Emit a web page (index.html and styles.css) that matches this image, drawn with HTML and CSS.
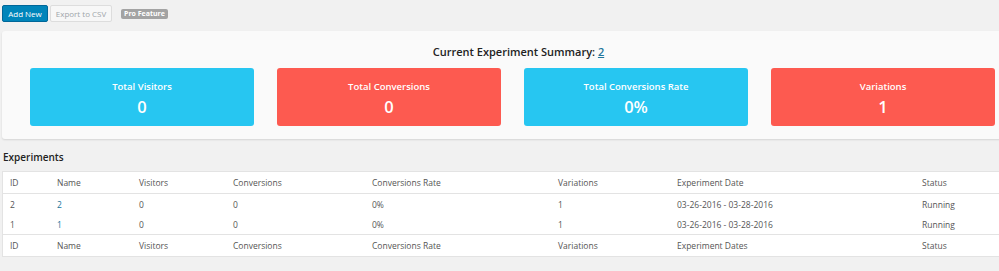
FILE: index.html
```html
<!DOCTYPE html>
<html>
<head>
    <title>Experiments</title>
    <link rel="stylesheet" href="styles.css">
</head>
<body>
    <div class="toolbar">
        <button class="button button-primary">Add New</button>
        <button class="button button-disabled">Export to CSV</button>
        <span class="pro-badge">Pro Feature</span>
    </div>

    <div class="summary-panel">
        <h2 class="summary-title">Current Experiment Summary: <a href="#">2</a></h2>
        <div class="summary-cards">
            <div class="card card-blue">
                <div class="card-label">Total Visitors</div>
                <div class="card-value">0</div>
            </div>
            <div class="card card-red">
                <div class="card-label">Total Conversions</div>
                <div class="card-value">0</div>
            </div>
            <div class="card card-blue">
                <div class="card-label">Total Conversions Rate</div>
                <div class="card-value">0%</div>
            </div>
            <div class="card card-red">
                <div class="card-label">Variations</div>
                <div class="card-value">1</div>
            </div>
        </div>
    </div>

    <h3 class="section-title">Experiments</h3>

    <table class="experiments">
        <thead>
            <tr>
                <th class="col-id">ID</th>
                <th class="col-name">Name</th>
                <th class="col-visitors">Visitors</th>
                <th class="col-conv">Conversions</th>
                <th class="col-rate">Conversions Rate</th>
                <th class="col-var">Variations</th>
                <th class="col-date">Experiment Date</th>
                <th>Status</th>
            </tr>
        </thead>
        <tbody>
            <tr>
                <td>2</td>
                <td><a href="#">2</a></td>
                <td>0</td>
                <td>0</td>
                <td>0%</td>
                <td>1</td>
                <td>03-26-2016 - 03-28-2016</td>
                <td>Running</td>
            </tr>
            <tr>
                <td>1</td>
                <td><a href="#">1</a></td>
                <td>0</td>
                <td>0</td>
                <td>0%</td>
                <td>1</td>
                <td>03-26-2016 - 03-28-2016</td>
                <td>Running</td>
            </tr>
        </tbody>
        <tfoot>
            <tr>
                <th>ID</th>
                <th>Name</th>
                <th>Visitors</th>
                <th>Conversions</th>
                <th>Conversions Rate</th>
                <th>Variations</th>
                <th>Experiment Dates</th>
                <th>Status</th>
            </tr>
        </tfoot>
    </table>
</body>
</html>
```

FILE: styles.css
```css
html, body {
    overflow: hidden;
}

body {
    font-family: "Open Sans", sans-serif;
    margin: 0;
    padding: 0 0 0 2px;
    background-color: #f1f1f1;
    color: #444;
    width: 1030px;
}

.toolbar {
    display: flex;
    align-items: center;
    padding-top: 5px;
    height: 17px;
}

.button {
    font-family: "Open Sans", sans-serif;
    font-size: 8px;
    height: 17px;
    line-height: 15px;
    padding: 0;
    border-radius: 2px;
    margin-right: 2px;
    white-space: nowrap;
    box-sizing: border-box;
    cursor: pointer;
}

.button-primary {
    background-color: #0085ba;
    border: 1px solid #006799;
    color: white;
    width: 46px;
}

.button-disabled {
    background-color: #f7f7f7;
    border: 1px solid #ddd;
    color: #a0a5aa;
    width: 62px;
}

.pro-badge {
    background-color: #a3a3a3;
    color: white;
    font-size: 7px;
    font-weight: bold;
    padding: 0 3px;
    height: 10px;
    line-height: 10px;
    border-radius: 2px;
    margin-left: 7px;
}

.summary-panel {
    margin-top: 9px;
    width: 965px;
    padding: 13px 28px 13px 28px;
    background-color: #fafafa;
    border-radius: 3px;
    box-shadow: 0 1px 2px rgba(0, 0, 0, 0.12);
}

.summary-title {
    text-align: center;
    font-size: 11px;
    font-weight: 600;
    color: #222;
    margin: 0 0 8px 0;
    padding-left: 12px;
    line-height: 16px;
}

.summary-title a {
    color: #21759b;
}

.summary-cards {
    display: grid;
    grid-template-columns: repeat(4, 1fr);
    column-gap: 23px;
}

.card {
    height: 58px;
    border-radius: 3px;
    color: white;
    text-align: center;
    box-sizing: border-box;
    padding-top: 12px;
}

.card-blue {
    background-color: #27c6f1;
}

.card-red {
    background-color: #fd5a50;
}

.card-label {
    font-size: 9.5px;
    font-weight: 600;
    line-height: 14px;
}

.card-value {
    font-size: 16.5px;
    font-weight: 600;
    line-height: 24px;
    margin-top: 1px;
}

.section-title {
    font-size: 10px;
    font-weight: 600;
    color: #222;
    margin: 10px 0 0 1px;
    line-height: 16px;
}

.experiments {
    margin-top: 6px;
    width: 1010px;
    border-collapse: collapse;
    background-color: white;
    border: 1px solid #e3e3e3;
    font-size: 8.5px;
    color: #555;
}

.experiments th,
.experiments td {
    text-align: left;
    font-weight: normal;
    padding: 0 0 0 7px;
}

.experiments thead th,
.experiments tfoot th {
    height: 21px;
}

.experiments thead tr {
    border-bottom: 1px solid #e3e3e3;
}

.experiments tfoot tr {
    border-top: 1px solid #e3e3e3;
}

.experiments tbody td {
    height: 20px;
}

.experiments a {
    color: #21759b;
    text-decoration: none;
}

.col-id { width: 40px; }
.col-name { width: 75px; }
.col-visitors { width: 87px; }
.col-conv { width: 132px; }
.col-rate { width: 179px; }
.col-var { width: 112px; }
.col-date { width: 238px; }
```
